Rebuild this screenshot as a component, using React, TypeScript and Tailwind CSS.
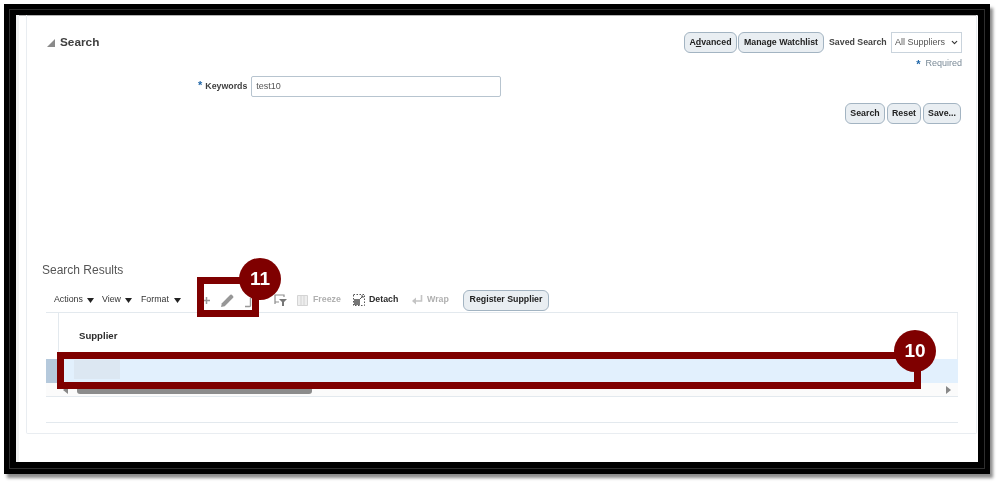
import React from 'react';
import { ChevronDown } from 'lucide-react';

const Caret = () => (
  <svg width="7" height="5" viewBox="0 0 7 5" className="shrink-0">
    <path d="M0 0h7L3.5 5z" fill="#222" />
  </svg>
);

const ToolButton = ({ children, className = '' }: { children: React.ReactNode; className?: string }) => (
  <button
    type="button"
    className={`flex h-[21px] items-center justify-center rounded-[6px] border border-[#a3b4c2] bg-[#e9eef2] text-[8.8px] font-bold text-[#222] ${className}`}
  >
    {children}
  </button>
);

const Marker = ({ label, className }: { label: string; className: string }) => (
  <div className={`absolute flex h-[42px] w-[42px] items-center justify-center rounded-full bg-[#7f0000] text-[19px] font-bold text-white ${className}`}>
    {label}
  </div>
);

export default function App() {
  return (
    <div className="relative h-[486px] w-[1004px] overflow-hidden bg-white pl-[4px] pt-[4px] font-['Liberation_Sans',Arial,sans-serif] blur-[0.35px]">
      <div className="h-[470px] w-[986px] border-x-[12px] border-b-[12px] border-t-[11px] border-black shadow-[3px_4px_3px_rgba(0,0,0,0.45)] outline outline-[1px] -outline-offset-[6px] outline-[#2e2e2e]">
        <div className="h-full border-l-[3px] border-[#f0f1f2] bg-white pl-[7px] pr-[1px] shadow-[inset_0_1px_0_#b5b5b5]">
          <div className="h-[419px] rounded-b-[2px] border-x border-b border-[#e9edf1] pt-[17px]">
            {/* search header */}
            <div className="flex h-[21px] items-center justify-between pl-[20px] pr-[14px]">
              <div className="flex items-center gap-[5px]">
                <svg width="8" height="8" viewBox="0 0 8 8">
                  <path d="M8 0v8H0z" fill="#8a8a8a" />
                </svg>
                <span className="text-[11.8px] font-bold text-[#3f3f3f]">Search</span>
              </div>
              <div className="flex items-center">
                <ToolButton className="w-[53px]">
                  <span>
                    A<span className="underline">d</span>vanced
                  </span>
                </ToolButton>
                <ToolButton className="ml-[1px] w-[86px]">Manage Watchlist</ToolButton>
                <span className="ml-[5px] w-[57px] whitespace-nowrap text-[8.8px] font-bold text-[#444]">Saved Search</span>
                <div className="ml-[5px] flex h-[21px] w-[71px] items-center justify-between border border-[#c9d3dc] bg-white pl-[3px] pr-[2px] text-[9px] text-[#555]">
                  All Suppliers
                  <ChevronDown size={9} strokeWidth={3} className="text-[#333]" />
                </div>
              </div>
            </div>

            <div className="mt-[5px] flex h-[12px] items-center justify-end gap-[5px] pr-[14px] text-[9px] text-[#7a8a97]">
              <span className="text-[11px] font-bold leading-none text-[#1f66a8]">*</span>
              Required
            </div>

            <div className="mt-[6px] flex items-center pl-[171px]">
              <span className="mb-[3px] text-[11px] font-bold leading-none text-[#1f66a8]">*</span>
              <span className="ml-[3px] text-[8.8px] font-bold text-[#3f3f3f]">Keywords</span>
              <div className="ml-[4px] flex h-[21px] w-[250px] items-center rounded-[2px] border border-[#b7c4cf] bg-white pl-[4px] text-[9px] text-[#555]">
                test10
              </div>
            </div>

            <div className="mt-[6px] flex justify-end gap-[2px] pr-[15px]">
              <ToolButton className="w-[40px]">Search</ToolButton>
              <ToolButton className="w-[34px]">Reset</ToolButton>
              <ToolButton className="w-[38px]">Save...</ToolButton>
            </div>

            <h2 className="ml-[15px] mt-[139px] h-[14px] text-[12px] leading-[14px] text-[#555]">Search Results</h2>

            {/* toolbar */}
            <div className="ml-[19px] mt-[13px] flex h-[20px] items-center text-[8.8px] text-[#333]">
              <span className="ml-[8px] w-[29px]">Actions</span>
              <span className="ml-[4px]"><Caret /></span>
              <span className="ml-[8px] w-[19px]">View</span>
              <span className="ml-[4px]"><Caret /></span>
              <span className="ml-[9px] w-[28px]">Format</span>
              <span className="ml-[5px]"><Caret /></span>
              <svg width="7" height="7" viewBox="0 0 7 7" className="ml-[22px]">
                <path d="M3.5 0v7M0 3.5h7" stroke="#999" strokeWidth="1.5" />
              </svg>
              <svg width="13" height="13" viewBox="0 0 12 12" className="ml-[11px]">
                <path d="M0 12l.8-3.4L8.6.8a1 1 0 0 1 1.4 0l1.2 1.2a1 1 0 0 1 0 1.4L3.4 11.2z" fill="#979797" />
              </svg>
              <svg width="8" height="10" viewBox="0 0 8 10" className="ml-[10px] mt-[5px]">
                <path d="M6.5 0v7.5a1 1 0 0 1-1 1H1" stroke="#999" strokeWidth="1.4" fill="none" />
              </svg>
              <svg width="13" height="12" viewBox="0 0 13 12" className="ml-[22px]">
                <path d="M1 10V1h9v2M1 8h4" stroke="#8e8e8e" strokeWidth="1.2" fill="none" />
                <path d="M5 5h8L10 8v4H8V8z" fill="#777" />
              </svg>
              <svg width="11" height="11" viewBox="0 0 11 11" className="ml-[10px]">
                <path d="M.5.5h10v10H.5zM4 .5v10M7 .5v10" stroke="#d4d4d4" fill="#eee" />
              </svg>
              <span className="ml-[5px] w-[27px] font-bold text-[#b0b0b0]">Freeze</span>
              <svg width="12" height="12" viewBox="0 0 12 12" className="ml-[13px]">
                <path d="M.5.5h11v11H.5z" stroke="#555" strokeDasharray="1.5 1.5" fill="none" />
                <path d="M1 5h6v6H1z" fill="#777" />
                <path d="M7 5l3-3M8 2h2v2" stroke="#555" fill="none" />
              </svg>
              <span className="ml-[4px] w-[29px] font-bold text-[#2c2c2c]">Detach</span>
              <svg width="11" height="10" viewBox="0 0 11 10" className="ml-[14px]">
                <path d="M9.5 0v6H3" stroke="#c4c4c4" strokeWidth="1.6" fill="none" />
                <path d="M4 2.5L0 6l4 3.5z" fill="#c4c4c4" />
              </svg>
              <span className="ml-[4px] w-[22px] font-bold text-[#b0b0b0]">Wrap</span>
              <ToolButton className="ml-[14px] h-[20px] w-[86px]">Register Supplier</ToolButton>
            </div>

            {/* results table */}
            <div className="ml-[19px] mt-[2px] w-[912px] border-t border-[#e3e9ee]">
              <div className="flex h-[46px] border-r border-[#eceff2]">
                <div className="w-[13px] border-r border-[#e3e9ee]" />
                <div className="flex items-center pl-[20px] text-[9.6px] font-bold text-[#2c2c2c]">Supplier</div>
              </div>
              <div className="flex h-[24px] bg-[#e2f0fd]">
                <div className="w-[13px] bg-[#b5c9dc]" />
                <div className="ml-[15px] mt-[1px] h-[19px] w-[46px] bg-[#dce7f2]" />
              </div>
              <div className="flex h-[14px] items-center justify-between border-b border-[#e3e9ee] bg-[#fbfbfb] pl-[17px] pr-[7px]">
                <svg width="5" height="8" viewBox="0 0 5 8"><path d="M5 0v8L0 4z" fill="#888" /></svg>
                <div className="ml-[9px] mr-auto mt-[1px] h-[8px] w-[235px] rounded-b-[3px] bg-[#8c8c8c]" />
                <svg width="5" height="8" viewBox="0 0 5 8"><path d="M0 0v8l5-4z" fill="#888" /></svg>
              </div>
              <div className="h-[26px] border-b border-[#e3e9ee]" />
            </div>
          </div>
        </div>
      </div>

      {/* callouts */}
      <div className="absolute left-[197px] top-[277px] h-[40px] w-[62px] border-[7px] border-[#7f0000]" />
      <Marker label="11" className="left-[239px] top-[258px]" />
      <div className="absolute left-[57px] top-[352px] h-[37px] w-[864px] border-[7px] border-[#7f0000]" />
      <Marker label="10" className="left-[894px] top-[330px]" />
    </div>
  );
}
